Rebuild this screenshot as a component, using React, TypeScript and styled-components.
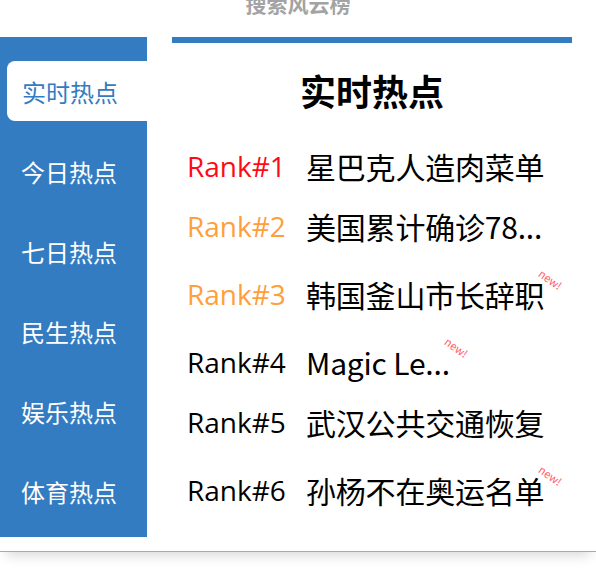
import * as React from 'react'
import styled, { createGlobalStyle } from 'styled-components'

const GlobalStyle = createGlobalStyle`
    *, *::after, *::before {
        box-sizing: border-box;
    }
    body {
        margin: 0;
        background: #fff;
        font-family: "Noto Sans CJK SC", "Noto Sans", sans-serif;
        overflow: hidden;
    }
`

const blue = '#337cc2'

type Item = {
    title: string
    isNew?: boolean
}

const tabs = ['实时热点', '今日热点', '七日热点', '民生热点', '娱乐热点', '体育热点']

const items: Item[] = [
    { title: '星巴克人造肉菜单' },
    { title: '美国累计确诊78...' },
    { title: '韩国釜山市长辞职', isNew: true },
    { title: 'Magic Le...', isNew: true },
    { title: '武汉公共交通恢复' },
    { title: '孙杨不在奥运名单', isNew: true },
]

const rankColor = (i: number) => {
    if (i === 0) return '#ff0a14'
    if (i < 3) return '#ff9f3c'
    return '#000'
}

const App: React.FC = () => {
    const [active, setActive] = React.useState(0)

    return (
        <Wrapper>
            <GlobalStyle />
            <PageTitle>搜索风云榜</PageTitle>
            <Card>
                <SideNav>
                    {tabs.map((tab, i) => (
                        <Tab key={tab} active={i === active} onClick={() => setActive(i)}>
                            {tab}
                        </Tab>
                    ))}
                </SideNav>
                <Content>
                    <TopBar />
                    <Heading>{tabs[active]}</Heading>
                    <RankList>
                        {items.map((item, i) => (
                            <Row key={i} hasBadge={!!item.isNew}>
                                <RankLabel color={rankColor(i)}>Rank#{i + 1}</RankLabel>
                                <Title>
                                    {item.title}
                                    {item.isNew && <NewBadge>new!</NewBadge>}
                                </Title>
                            </Row>
                        ))}
                    </RankList>
                </Content>
            </Card>
        </Wrapper>
    )
}

const Wrapper = styled.div`
    width: 596px;
    height: 578px;
    overflow: hidden;
`

const PageTitle = styled.h2`
    margin: -11px 0 0;
    height: 48px;
    font-size: 21px;
    line-height: 28px;
    font-weight: 700;
    color: #a3a3a3;
    text-align: center;
`

const Card = styled.div`
    display: flex;
    align-items: flex-start;
    height: 514px;
    background: #fff;
    box-shadow: 0 1px 0 #a9a9a9, 0 10px 12px -6px rgba(0, 0, 0, 0.16);
`

const SideNav = styled.ul`
    list-style: none;
    margin: 0;
    width: 147px;
    height: 500px;
    padding: 24px 0 0;
    background: ${blue};
`

const Tab = styled.li<{ active: boolean }>`
    height: 60px;
    margin: 0 0 20px ${p => (p.active ? '7px' : '0')};
    padding-left: ${p => (p.active ? '15px' : '21px')};
    display: flex;
    align-items: center;
    font-size: 24px;
    color: ${p => (p.active ? blue : '#fff')};
    background: ${p => (p.active ? '#fff' : 'transparent')};
    border-radius: 8px 0 0 8px;
    cursor: pointer;
`

const Content = styled.div`
    flex: 1;
    padding: 0 24px 0 25px;
`

const TopBar = styled.div`
    height: 6px;
    background: ${blue};
`

const Heading = styled.h1`
    margin: 0;
    height: 93px;
    padding-top: 22px;
    font-size: 36px;
    line-height: 50px;
    font-weight: 700;
    text-align: center;
    color: #000;
`

const RankList = styled.ul`
    list-style: none;
    margin: 0;
    padding: 0 0 0 15px;
`

const Row = styled.li<{ hasBadge: boolean }>`
    display: flex;
    align-items: center;
    height: ${p => (p.hasBadge ? '68px' : '60px')};
    padding-top: ${p => (p.hasBadge ? '8px' : '0')};
    font-size: 30px;
`

const RankLabel = styled.span<{ color: string }>`
    width: 119px;
    flex: none;
    font-family: "Open Sans", "Noto Sans", sans-serif;
    font-size: 28px;
    color: ${p => p.color};
`

const Title = styled.span`
    position: relative;
    white-space: nowrap;
    color: #000;
    letter-spacing: -0.2px;
`

const NewBadge = styled.span`
    position: absolute;
    right: -19px;
    top: 1px;
    font-size: 11px;
    line-height: 12px;
    letter-spacing: 0;
    color: #ff5a6a;
    transform: rotate(35deg);
`

export default App
